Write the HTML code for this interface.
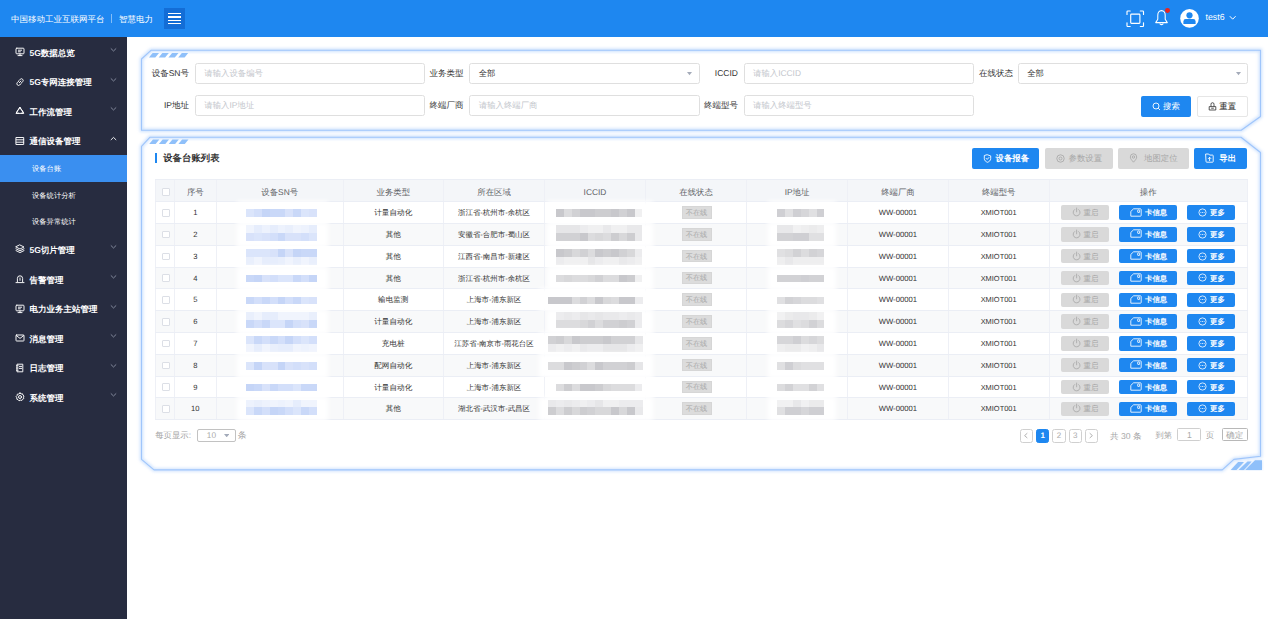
<!DOCTYPE html><html><head><meta charset="utf-8"><title>设备台账</title><style>
*{box-sizing:border-box;margin:0;padding:0}
html,body{width:1268px;height:619px;overflow:hidden;background:#fff}
body{font-family:"Liberation Sans",sans-serif;text-rendering:geometricPrecision;position:relative;color:#333;font-size:8.5px;line-height:1}
.abs{position:absolute}
.nw{white-space:nowrap}
#hdr{position:absolute;left:0;top:0;width:1268px;height:37px;background:#1e87f0}
#hdr .t{position:absolute;color:#fff;font-size:8.5px;line-height:10px;white-space:nowrap}
#side{position:absolute;left:0;top:37px;width:127px;height:582px;background:#272c40}
.mi{position:absolute;left:0;width:127px;height:29.6px}
.mi .tx{position:absolute;left:29.5px;top:9.8px;font-size:8.5px;line-height:10px;font-weight:bold;color:#fff;white-space:nowrap}
.mi svg.ic{position:absolute;left:15.3px;top:9.2px}
.mi svg.ch{position:absolute;left:110px;top:9.3px}
.si{position:absolute;left:0;width:127px;height:26.5px}
.si .tx{position:absolute;left:32px;top:8.6px;font-size:7.3px;line-height:9px;color:#fff;white-space:nowrap}
.lab{position:absolute;width:60px;text-align:right;font-size:8.5px;line-height:10px;color:#333;white-space:nowrap}
.inp{position:absolute;height:21px;width:230.3px;border:1px solid #dfdfdf;border-radius:2.5px;background:#fff}
.inp span{position:absolute;left:8.5px;top:5.4px;font-size:8.4px;line-height:9px;color:#c3c6cc;white-space:nowrap}
.inp span.v{color:#333;font-size:8.3px}
.inp svg{position:absolute;right:6.4px;top:8.4px}
.btn{position:absolute;border-radius:2px;white-space:nowrap;font-size:8.4px;line-height:10px}
.btn .bt{position:absolute;top:5.4px}
.b{background:#1e87f0;color:#fff}
.g{background:#d9d9d9;color:#a6a6a6}
.w{background:#fff;color:#333;border:1px solid #e6e6e6}
#tbl{position:absolute;left:155px;top:179px;width:1092.75px;height:242px}
.tr{position:absolute;left:0;width:1092.75px;border-bottom:1px solid #ebeef5}
.td{position:absolute;top:0;height:100%;border-right:1px solid #eef0f6;text-align:center;white-space:nowrap;overflow:visible}
.td.f{border-left:1px solid #eef0f6}
.th .td{font-size:8.4px;color:#606266}
.r .td{font-size:7.6px;color:#333}
.cx{position:absolute;left:0;right:0;text-align:center;white-space:nowrap}
.cb{position:absolute;left:6.1px;width:7.8px;height:7.8px;border:1px solid #dcdfe6;border-radius:1px;background:#fff}
.tag{position:absolute;left:35.5px;width:30px;height:12.6px;background:#dcdcdc;border:1px solid #d6d6d6;font-size:7.2px;line-height:10.6px;padding-top:0.8px;color:#a9a9a9;text-align:center}
.rb{position:absolute;height:14.4px;border-radius:2px;font-size:7.4px;line-height:9px;white-space:nowrap}
.rb .bt{position:absolute;top:2.9px}
.pg{position:absolute;top:429.2px;width:13.4px;height:13.4px;border:1px solid #d0d0d0;border-radius:2.5px;font-size:8px;line-height:11.2px;text-align:center;color:#aaa;background:#fff}
.pg.on{background:#1e87f0;border-color:#1e87f0;color:#fff}
.gt{position:absolute;font-size:8.6px;line-height:10px;color:#a5a5a5;white-space:nowrap}
</style></head><body>
<div id="hdr">
<div class="t" style="left:11px;top:13.6px;width:92px">中国移动工业互联网平台</div>
<div class="abs" style="left:111px;top:14px;width:1px;height:9px;background:rgba(255,255,255,.45)"></div>
<div class="t" style="left:119px;top:13.6px">智慧电力</div>
<div class="abs" style="left:164px;top:8px;width:21px;height:21px;background:#136dd6"><div class="abs" style="left:4px;top:5.2px;width:13px;height:1.3px;background:#fff"></div><div class="abs" style="left:4px;top:8.4px;width:13px;height:1.3px;background:#fff"></div><div class="abs" style="left:4px;top:11.6px;width:13px;height:1.3px;background:#fff"></div><div class="abs" style="left:4px;top:14.8px;width:13px;height:1.3px;background:#fff"></div></div>
<svg class="abs" style="left:1126px;top:9.5px" width="18.5" height="17.5" viewBox="0 0 18.5 17.5" fill="none" stroke="#fff" stroke-width="1.15" stroke-linecap="round" stroke-linejoin="round"><path d="M1 4.5V1.8Q1 1 1.8 1H4.2 M14.3 1H16.7Q17.5 1 17.5 1.8V4.5 M17.5 12.7V15.7Q17.5 16.5 16.7 16.5H14.3 M4.2 16.5H1.8Q1 16.5 1 15.7V12.7"/><rect x="4.7" y="4.1" width="9.2" height="9.2" rx="0.8"/></svg>
<svg class="abs" style="left:1154px;top:9px" width="16" height="17" viewBox="0 0 16 17" fill="none" stroke="#fff" stroke-width="1.05" stroke-linejoin="round" stroke-linecap="round"><path d="M7.5 1.6C4.9 1.6 3.8 3.8 3.8 6.2V10.2L1.7 13.6H13.3L11.2 10.2V6.2C11.2 3.8 10.1 1.6 7.5 1.6Z"/><path d="M6 14.9Q7.5 16.3 9 14.9"/></svg>
<div class="abs" style="left:1164.8px;top:8.2px;width:4.8px;height:4.8px;border-radius:50%;background:#e8251f"></div>
<svg class="abs" style="left:1180px;top:9px" width="19" height="19" viewBox="0 0 19 19"><circle cx="9.5" cy="9.4" r="9.3" fill="#fff"/><circle cx="9.5" cy="6.3" r="3.1" fill="#1e87f0"/><path d="M3.4 15V12.4Q3.4 10 5.8 10H13.2Q15.6 10 15.6 12.4V15Z" fill="#1e87f0"/></svg>
<div class="t" style="left:1205.5px;top:12.4px;font-size:8.8px">test6</div>
<svg class="abs" style="left:1229px;top:15px" width="8" height="6" viewBox="0 0 8 6" fill="none" stroke="#fff" stroke-width="1"><path d="M0.8 1.2L3.7 4.2L6.6 1.2"/></svg>
</div>
<div id="side">
<div class="mi" style="top:0.8px"><svg class="ic" width="10" height="10" viewBox="0 0 10 10" fill="none" stroke="#fff" stroke-width="0.95" stroke-linejoin="round" stroke-linecap="round"><rect x="1" y="1.2" width="8" height="5.6" rx="0.8"/><path d="M3 8.6H7M5 6.8V8.6M3.4 3.2H6.6M3.4 4.8H5.4"/></svg><div class="tx">5G数据总览</div><svg class="ch" width="7" height="6" viewBox="0 0 7 6" fill="none" stroke="#8d93a6" stroke-width="0.9"><path d="M0.8 1.4L3.5 4L6.2 1.4"/></svg></div>
<div class="mi" style="top:30.4px"><svg class="ic" width="10" height="10" viewBox="0 0 10 10" fill="none" stroke="#fff" stroke-width="0.95" stroke-linejoin="round" stroke-linecap="round"><path d="M4.3 5.7L5.9 4.1M3.6 4.3L2.3 5.6A1.7 1.7 0 0 0 4.7 8L6 6.7M6.4 5.9L7.7 4.6A1.7 1.7 0 0 0 5.3 2.2L4 3.5"/></svg><div class="tx">5G专网连接管理</div><svg class="ch" width="7" height="6" viewBox="0 0 7 6" fill="none" stroke="#8d93a6" stroke-width="0.9"><path d="M0.8 1.4L3.5 4L6.2 1.4"/></svg></div>
<div class="mi" style="top:60.0px"><svg class="ic" width="10" height="10" viewBox="0 0 10 10" fill="none" stroke="#fff" stroke-width="0.95" stroke-linejoin="round" stroke-linecap="round"><path d="M5 1.4L6.6 4M7.4 4.6L8.6 7.2H6.2M3.8 7.2H1.4L2.6 4.6M3.4 4L5 1.4"/><path d="M5 1.4L8.6 7.4H1.4Z"/></svg><div class="tx">工作流管理</div><svg class="ch" width="7" height="6" viewBox="0 0 7 6" fill="none" stroke="#8d93a6" stroke-width="0.9"><path d="M0.8 1.4L3.5 4L6.2 1.4"/></svg></div>
<div class="mi" style="top:89.6px"><svg class="ic" width="10" height="10" viewBox="0 0 10 10" fill="none" stroke="#fff" stroke-width="0.95" stroke-linejoin="round" stroke-linecap="round"><path d="M1.3 1.5H8.7V8.5H1.3ZM1.3 3.8H8.7M1.3 6.2H8.7"/></svg><div class="tx">通信设备管理</div><svg class="ch" width="7" height="6" viewBox="0 0 7 6" fill="none" stroke="#fff" stroke-width="0.9"><path d="M0.8 4L3.5 1.4L6.2 4"/></svg></div>
<div class="si" style="top:118.0px;background:#3a8ff0"><div class="tx">设备台账</div></div>
<div class="si" style="top:144.6px"><div class="tx" style="top:9.2px">设备统计分析</div></div>
<div class="si" style="top:171.2px"><div class="tx">设备异常统计</div></div>
<div class="mi" style="top:198.2px"><svg class="ic" width="10" height="10" viewBox="0 0 10 10" fill="none" stroke="#fff" stroke-width="0.95" stroke-linejoin="round" stroke-linecap="round"><path d="M5 1L9 3L5 5L1 3ZM1 4.8L5 6.8L9 4.8M1 6.6L5 8.6L9 6.6"/></svg><div class="tx">5G切片管理</div><svg class="ch" width="7" height="6" viewBox="0 0 7 6" fill="none" stroke="#8d93a6" stroke-width="0.9"><path d="M0.8 1.4L3.5 4L6.2 1.4"/></svg></div>
<div class="mi" style="top:227.8px"><svg class="ic" width="10" height="10" viewBox="0 0 10 10" fill="none" stroke="#fff" stroke-width="0.95" stroke-linejoin="round" stroke-linecap="round"><path d="M2.4 7.6V4.4A2.6 2.6 0 0 1 7.6 4.4V7.6M1 8.6H9M5 4V6.4"/></svg><div class="tx">告警管理</div><svg class="ch" width="7" height="6" viewBox="0 0 7 6" fill="none" stroke="#8d93a6" stroke-width="0.9"><path d="M0.8 1.4L3.5 4L6.2 1.4"/></svg></div>
<div class="mi" style="top:257.4px"><svg class="ic" width="10" height="10" viewBox="0 0 10 10" fill="none" stroke="#fff" stroke-width="0.95" stroke-linejoin="round" stroke-linecap="round"><rect x="1" y="1.2" width="8" height="5.6" rx="0.8"/><path d="M3 8.6H7M5 6.8V8.6M3.4 3.2H6.6M3.4 4.8H5.4"/></svg><div class="tx">电力业务主站管理</div><svg class="ch" width="7" height="6" viewBox="0 0 7 6" fill="none" stroke="#8d93a6" stroke-width="0.9"><path d="M0.8 1.4L3.5 4L6.2 1.4"/></svg></div>
<div class="mi" style="top:287.0px"><svg class="ic" width="10" height="10" viewBox="0 0 10 10" fill="none" stroke="#fff" stroke-width="0.95" stroke-linejoin="round" stroke-linecap="round"><rect x="1" y="2" width="8" height="6" rx="0.6"/><path d="M1.4 2.6L5 5.4L8.6 2.6"/></svg><div class="tx">消息管理</div><svg class="ch" width="7" height="6" viewBox="0 0 7 6" fill="none" stroke="#8d93a6" stroke-width="0.9"><path d="M0.8 1.4L3.5 4L6.2 1.4"/></svg></div>
<div class="mi" style="top:316.6px"><svg class="ic" width="10" height="10" viewBox="0 0 10 10" fill="none" stroke="#fff" stroke-width="0.95" stroke-linejoin="round" stroke-linecap="round"><path d="M2.4 1.2H7.8V8.8H2.4ZM1.4 2.8H3.2M1.4 5H3.2M1.4 7.2H3.2M4.4 3.4H6.6M4.4 5.4H6.6"/></svg><div class="tx">日志管理</div><svg class="ch" width="7" height="6" viewBox="0 0 7 6" fill="none" stroke="#8d93a6" stroke-width="0.9"><path d="M0.8 1.4L3.5 4L6.2 1.4"/></svg></div>
<div class="mi" style="top:346.2px"><svg class="ic" width="10" height="10" viewBox="0 0 10 10" fill="none" stroke="#fff" stroke-width="0.95" stroke-linejoin="round" stroke-linecap="round"><circle cx="5" cy="5" r="1.5"/><path d="M5 1.1L6.1 1.9L7.5 1.8L7.9 3.1L9 4L8.5 5.2L8.8 6.6L7.5 7.2L6.8 8.5L5.4 8.2L4 8.8L3.1 7.7L1.8 7.2L1.9 5.8L1.1 4.6L2.1 3.6L2.3 2.2L3.7 2L5 1.1Z"/></svg><div class="tx">系统管理</div><svg class="ch" width="7" height="6" viewBox="0 0 7 6" fill="none" stroke="#8d93a6" stroke-width="0.9"><path d="M0.8 1.4L3.5 4L6.2 1.4"/></svg></div>
</div>
<svg class="abs" style="left:0;top:0" width="1268" height="619" viewBox="0 0 1268 619">
<defs><filter id="gl" x="-5%" y="-5%" width="110%" height="110%"><feGaussianBlur stdDeviation="1.6"/></filter></defs>
<g fill="#fff" stroke="none"><path d="M141.5 59L151 50.3H1260.5V116.5L1241.2 130.2H141.5Z"/><path d="M141.5 146.3L149.8 137.3H1241L1260.5 152.5V456.2L1233.9 459.4L1222.3 469.9H154L141.5 459.4Z"/></g>
<g fill="none" stroke="#a6cafc" stroke-width="3.4" filter="url(#gl)" opacity="0.55"><path d="M141.5 59L151 50.3H1260.5V116.5L1241.2 130.2H141.5Z"/><path d="M141.5 146.3L149.8 137.3H1241L1260.5 152.5V456.2L1233.9 459.4L1222.3 469.9H154L141.5 459.4Z"/></g>
<g fill="none" stroke="#9fc5fb" stroke-width="1.1" stroke-linejoin="round"><path d="M141.5 59L151 50.3H1260.5V116.5L1241.2 130.2H141.5Z"/><path d="M141.5 146.3L149.8 137.3H1241L1260.5 152.5V456.2L1233.9 459.4L1222.3 469.9H154L141.5 459.4Z"/></g>
<g fill="#8fc0fa"><path d="M148.9 57.6L152.6 53.0H159.0L155.3 57.6Z"/><path d="M158.7 57.6L162.3 53.0H168.8L165.1 57.6Z"/><path d="M168.4 57.6L172.1 53.0H178.5L174.8 57.6Z"/><path d="M178.2 57.6L181.8 53.0H188.2L184.6 57.6Z"/><path d="M149.2 143.9L152.9 139.6H159.3L155.6 143.9Z"/><path d="M158.9 143.9L162.6 139.6H169.0L165.3 143.9Z"/><path d="M168.7 143.9L172.4 139.6H178.8L175.1 143.9Z"/><path d="M178.4 143.9L182.1 139.6H188.5L184.8 143.9Z"/></g>
<g fill="#a6cafc" filter="url(#gl)" opacity="0.5"><path d="M1230.7 470L1238.1 462H1244L1236.5 470Z"/><path d="M1238.5 470L1247.5 461.4H1251.7L1244 470Z"/><path d="M1245.2 470L1255 460.3H1262V470Z"/></g>
<g fill="#8fc0fa"><path d="M1230.7 470L1238.1 462H1244L1236.5 470Z"/><path d="M1238.5 470L1247.5 461.4H1251.7L1244 470Z"/><path d="M1245.2 470L1255 460.3H1262V470Z"/></g>
</svg>
<div class="lab" style="left:129.00px;top:68.30px">设备SN号</div>
<div class="inp" style="left:194.75px;top:63.00px"><span>请输入设备编号</span></div>
<div class="lab" style="left:403.60px;top:68.30px">业务类型</div>
<div class="inp" style="left:469.25px;top:63.00px"><span class="v">全部</span><svg width="5" height="3.2" viewBox="0 0 5 3.2"><path d="M0 0H5L2.5 3.2Z" fill="#a4abb9"/></svg></div>
<div class="lab" style="left:678.00px;top:68.30px">ICCID</div>
<div class="inp" style="left:743.50px;top:63.00px"><span>请输入ICCID</span></div>
<div class="lab" style="left:953.00px;top:68.30px">在线状态</div>
<div class="inp" style="left:1017.75px;top:63.00px"><span class="v">全部</span><svg width="5" height="3.2" viewBox="0 0 5 3.2"><path d="M0 0H5L2.5 3.2Z" fill="#a4abb9"/></svg></div>
<div class="lab" style="left:129.00px;top:100.30px">IP地址</div>
<div class="inp" style="left:194.75px;top:95.00px"><span>请输入IP地址</span></div>
<div class="lab" style="left:403.60px;top:100.30px">终端厂商</div>
<div class="inp" style="left:469.25px;top:95.00px"><span>请输入终端厂商</span></div>
<div class="lab" style="left:678.00px;top:100.30px">终端型号</div>
<div class="inp" style="left:743.50px;top:95.00px"><span>请输入终端型号</span></div>
<div class="btn b" style="left:1141px;top:96.3px;width:50.2px;height:20.4px"><svg class="abs" style="left:10.6px;top:5.5px" width="9" height="9" viewBox="0 0 9 9" fill="none" stroke="#fff" stroke-width="0.9"><circle cx="4" cy="4" r="3"/><path d="M6.2 6.2L8 8"/></svg><span class="bt" style="left:22px;top:4.3px">搜索</span></div>
<div class="btn w" style="left:1196.8px;top:96.3px;width:50.75px;height:20.4px"><svg class="abs" style="left:10px;top:4.4px" width="9" height="9" viewBox="0 0 9 9" fill="none" stroke="#444" stroke-width="0.9" stroke-linejoin="round"><path d="M1.2 8V4.6H7.8V8ZM3 4.6V2.2A1.5 1.5 0 0 1 6 2.2V4.6M3.2 6.2H5.8"/></svg><span class="bt" style="left:21.5px;top:3.4px;color:#222">重置</span></div>
<div class="abs" style="left:155px;top:153.3px;width:2px;height:9.3px;background:#1e87f0"></div>
<div class="abs nw" style="left:163.2px;top:153px;font-size:9.3px;line-height:11px;font-weight:bold;color:#333;letter-spacing:0.1px">设备台账列表</div>
<div class="btn b" style="left:972.00px;top:148px;width:67.25px;height:20.8px"><svg class="abs" style="left:10.75px;top:5.7px" width="9" height="9" viewBox="0 0 9 9" fill="none" stroke="#fff" stroke-width="0.9" stroke-linejoin="round" stroke-linecap="round"><path d="M4.5 0.8L7.7 1.9V4.6C7.7 6.4 6.3 7.6 4.5 8.3C2.7 7.6 1.3 6.4 1.3 4.6V1.9Z"/><path d="M3.2 4.4L4.2 5.4L5.9 3.5"/></svg><span class="bt" style="left:23.50px"><b>设备报备</b></span></div>
<div class="btn g" style="left:1044.75px;top:148px;width:67.75px;height:20.8px"><svg class="abs" style="left:11.00px;top:5.7px" width="9" height="9" viewBox="0 0 9 9" fill="none" stroke="#a6a6a6" stroke-width="0.8"><circle cx="4.5" cy="4.5" r="3.7"/><circle cx="4.5" cy="4.5" r="1.5"/></svg><span class="bt" style="left:23.75px">参数设置</span></div>
<div class="btn g" style="left:1117.75px;top:148px;width:70.75px;height:20.8px"><svg class="abs" style="left:11.50px;top:5.2px" width="9" height="10" viewBox="0 0 9 10" fill="none" stroke="#a6a6a6" stroke-width="0.8"><path d="M4.5 9.2C2.6 7 1.3 5.6 1.3 4A3.2 3.2 0 0 1 7.7 4C7.7 5.6 6.4 7 4.5 9.2Z"/><circle cx="4.5" cy="4" r="1.2"/></svg><span class="bt" style="left:26.25px">地图定位</span></div>
<div class="btn b" style="left:1193.50px;top:148px;width:53.75px;height:20.8px"><svg class="abs" style="left:11.60px;top:5.4px" width="9" height="10" viewBox="0 0 9 10" fill="none" stroke="#fff" stroke-width="0.9" stroke-linejoin="round" stroke-linecap="round"><path d="M1 1H3.7L4.6 2.1H7.6Q8.2 2.1 8.2 2.7V8.6Q8.2 9.2 7.6 9.2H1.6Q1 9.2 1 8.6Z"/><path d="M4.6 7.6V4.4M3.3 5.6L4.6 4.3L5.9 5.6"/></svg><span class="bt" style="left:25.80px"><b>导出</b></span></div>
<div id="tbl">
<div class="tr th" style="top:0;height:23px;background:#f4f6f9;border-top:1px solid #ebeef5">
<div class="td f" style="left:0.00px;width:19.50px"><div class="cb" style="top:8.3px"></div></div>
<div class="td" style="left:19.50px;width:42.50px"><span class="cx" style="top:6.90px;line-height:10.0px">序号</span></div>
<div class="td" style="left:62.00px;width:126.50px"><span class="cx" style="top:6.90px;line-height:10.0px">设备SN号</span></div>
<div class="td" style="left:188.50px;width:100.50px"><span class="cx" style="top:6.90px;line-height:10.0px">业务类型</span></div>
<div class="td" style="left:289.00px;width:101.00px"><span class="cx" style="top:6.90px;line-height:10.0px">所在区域</span></div>
<div class="td" style="left:390.00px;width:101.00px"><span class="cx" style="top:6.90px;line-height:10.0px">ICCID</span></div>
<div class="td" style="left:491.00px;width:101.00px"><span class="cx" style="top:6.90px;line-height:10.0px">在线状态</span></div>
<div class="td" style="left:592.00px;width:101.00px"><span class="cx" style="top:6.90px;line-height:10.0px">IP地址</span></div>
<div class="td" style="left:693.00px;width:100.75px"><span class="cx" style="top:6.90px;line-height:10.0px">终端厂商</span></div>
<div class="td" style="left:793.75px;width:100.75px"><span class="cx" style="top:6.90px;line-height:10.0px">终端型号</span></div>
<div class="td" style="left:894.50px;width:198.25px"><span class="cx" style="top:6.90px;line-height:10.0px">操作</span></div>
</div>
<div class="tr r" style="top:23px;height:22px;background:#fff">
<div class="td f" style="left:0.00px;width:19.50px"><div class="cb" style="top:6.9px"></div></div>
<div class="td" style="left:19.50px;width:42.50px"><span class="cx" style="top:6.10px;line-height:9.0px">1</span></div>
<div class="td" style="left:62.00px;width:126.50px"><div class="abs" style="left:20.4px;top:-1.5px;width:91.0px;height:24.0px;background:#fff;filter:blur(2.5px)"></div><div class="abs" style="left:29.4px;top:7.4px;width:71.1px;height:7.6px;background:linear-gradient(90deg,#dbe5fb 0.0px,#dbe5fb 7.9px,#d3dffa 7.9px,#d3dffa 15.8px,#c5d5f7 15.8px,#c5d5f7 23.7px,#c9d8f8 23.7px,#c9d8f8 31.6px,#c9d8f8 31.6px,#c9d8f8 39.5px,#d8e2fa 39.5px,#d8e2fa 47.4px,#c9d8f8 47.4px,#c9d8f8 55.3px,#dbe5fb 55.3px,#dbe5fb 63.2px,#d8e2fa 63.2px,#d8e2fa 71.1px)"></div></div>
<div class="td" style="left:188.50px;width:100.50px"><span class="cx" style="top:6.10px;line-height:9.0px">计量自动化</span></div>
<div class="td" style="left:289.00px;width:101.00px"><span class="cx" style="top:6.10px;line-height:9.0px;font-size:7.45px">浙江省-杭州市-余杭区</span></div>
<div class="td" style="left:390.00px;width:101.00px"><div class="abs" style="left:1.5px;top:-1.5px;width:106.0px;height:24.0px;background:#fff;filter:blur(2.5px)"></div><div class="abs" style="left:10.5px;top:7.4px;width:86.9px;height:7.6px;background:linear-gradient(90deg,#c8c8cc 0.0px,#c8c8cc 7.9px,#dcdcde 7.9px,#dcdcde 15.8px,#d1d1d4 15.8px,#d1d1d4 23.7px,#c8c8cc 23.7px,#c8c8cc 31.6px,#c8c8cc 31.6px,#c8c8cc 39.5px,#cdcdd0 39.5px,#cdcdd0 47.4px,#cdcdd0 47.4px,#cdcdd0 55.3px,#c8c8cc 55.3px,#c8c8cc 63.2px,#d1d1d4 63.2px,#d1d1d4 71.1px,#c8c8cc 71.1px,#c8c8cc 79.0px,#f0f0f1 79.0px,#f0f0f1 86.9px)"></div></div>
<div class="td" style="left:491.00px;width:101.00px"><div class="tag" style="top:4.20px">不在线</div></div>
<div class="td" style="left:592.00px;width:101.00px"><div class="abs" style="left:21.0px;top:-1.5px;width:67.5px;height:24.0px;background:#fff;filter:blur(2.5px)"></div><div class="abs" style="left:30.0px;top:7.4px;width:47.4px;height:7.6px;background:linear-gradient(90deg,#cfcfd3 0.0px,#cfcfd3 7.9px,#e0e0e2 7.9px,#e0e0e2 15.8px,#cfcfd3 15.8px,#cfcfd3 23.7px,#d6d6d9 23.7px,#d6d6d9 31.6px,#e0e0e2 31.6px,#e0e0e2 39.5px,#cfcfd3 39.5px,#cfcfd3 47.4px)"></div></div>
<div class="td" style="left:693.00px;width:100.75px"><span class="cx" style="top:6.10px;line-height:9.0px;font-size:7.7px">WW-00001</span></div>
<div class="td" style="left:793.75px;width:100.75px"><span class="cx" style="top:6.10px;line-height:9.0px;font-size:7.45px">XMIOT001</span></div>
<div class="td" style="left:894.50px;width:198.25px"><div class="rb g" style="top:3.40px;left:11.5px;width:48.2px"><svg class="abs" style="left:10.7px;top:1.9px" width="9.2" height="10.35" viewBox="0 0 8 9" fill="none" stroke="#a6a6a6" stroke-width="0.7" stroke-linecap="round"><path d="M4 0.9V4.2M2.3 2.2A3 3 0 1 0 5.7 2.2"/></svg><span class="bt" style="left:22.6px">重启</span></div><div class="rb b" style="top:3.40px;left:69.6px;width:58.3px"><svg class="abs" style="left:11.1px;top:2.2px" width="12" height="9" viewBox="0 0 12 9" fill="none" stroke="#fff" stroke-width="0.85" stroke-linejoin="round"><path d="M0.8 8.2V3.4L3.6 0.8H10.4Q11.2 0.8 11.2 1.6V7.4Q11.2 8.2 10.4 8.2Z"/><rect x="7.7" y="1.9" width="1.9" height="2.6" rx="0.5"/></svg><span class="bt" style="left:25.9px"><b>卡信息</b></span></div><div class="rb b" style="top:3.40px;left:137.7px;width:48.1px"><svg class="abs" style="left:11.1px;top:2.5px" width="9" height="9" viewBox="0 0 9 9" fill="none" stroke="#fff" stroke-width="0.8"><circle cx="4.5" cy="4.5" r="3.6"/><g fill="#fff" stroke="none"><circle cx="2.9" cy="4.5" r="0.5"/><circle cx="4.5" cy="4.5" r="0.5"/><circle cx="6.1" cy="4.5" r="0.5"/></g></svg><span class="bt" style="left:22.8px"><b>更多</b></span></div></div>
</div>
<div class="tr r" style="top:45px;height:22px;background:#f8f9fa">
<div class="td f" style="left:0.00px;width:19.50px"><div class="cb" style="top:6.7px"></div></div>
<div class="td" style="left:19.50px;width:42.50px"><span class="cx" style="top:5.90px;line-height:9.0px">2</span></div>
<div class="td" style="left:62.00px;width:126.50px"><div class="abs" style="left:20.4px;top:-1.5px;width:91.0px;height:24.0px;background:#fff;filter:blur(2.5px)"></div><div class="abs" style="left:29.4px;top:1.2px;width:71.1px;height:7.7px;background:linear-gradient(90deg,#f0f4fd 0.0px,#f0f4fd 7.9px,#e6edfc 7.9px,#e6edfc 15.8px,#edf2fd 15.8px,#edf2fd 23.7px,#e6edfc 23.7px,#e6edfc 31.6px,#edf2fd 31.6px,#edf2fd 39.5px,#e9effc 39.5px,#e9effc 47.4px,#f0f4fd 47.4px,#f0f4fd 55.3px,#edf2fd 55.3px,#edf2fd 63.2px,#e6edfc 63.2px,#e6edfc 71.1px)"></div><div class="abs" style="left:29.4px;top:8.9px;width:71.1px;height:7.9px;background:linear-gradient(90deg,#d8e2fa 0.0px,#d8e2fa 7.9px,#dbe5fb 7.9px,#dbe5fb 15.8px,#d8e2fa 15.8px,#d8e2fa 23.7px,#d3dffa 23.7px,#d3dffa 31.6px,#c9d8f8 31.6px,#c9d8f8 39.5px,#d8e2fa 39.5px,#d8e2fa 47.4px,#d8e2fa 47.4px,#d8e2fa 55.3px,#d3dffa 55.3px,#d3dffa 63.2px,#dbe5fb 63.2px,#dbe5fb 71.1px)"></div></div>
<div class="td" style="left:188.50px;width:100.50px"><span class="cx" style="top:5.90px;line-height:9.0px">其他</span></div>
<div class="td" style="left:289.00px;width:101.00px"><span class="cx" style="top:5.90px;line-height:9.0px;font-size:7.45px">安徽省-合肥市-蜀山区</span></div>
<div class="td" style="left:390.00px;width:101.00px"><div class="abs" style="left:1.5px;top:-1.5px;width:106.0px;height:24.0px;background:#fff;filter:blur(2.5px)"></div><div class="abs" style="left:10.5px;top:1.2px;width:86.9px;height:7.7px;background:linear-gradient(90deg,#e6e6e8 0.0px,#e6e6e8 7.9px,#e6e6e8 7.9px,#e6e6e8 15.8px,#e6e6e8 15.8px,#e6e6e8 23.7px,#ececee 23.7px,#ececee 31.6px,#f0f0f1 31.6px,#f0f0f1 39.5px,#f0f0f1 39.5px,#f0f0f1 47.4px,#e9e9eb 47.4px,#e9e9eb 55.3px,#f0f0f1 55.3px,#f0f0f1 63.2px,#f0f0f1 63.2px,#f0f0f1 71.1px,#e9e9eb 71.1px,#e9e9eb 79.0px,#e9e9eb 79.0px,#e9e9eb 86.9px)"></div><div class="abs" style="left:10.5px;top:8.9px;width:86.9px;height:7.9px;background:linear-gradient(90deg,#d1d1d4 0.0px,#d1d1d4 7.9px,#d1d1d4 7.9px,#d1d1d4 15.8px,#d1d1d4 15.8px,#d1d1d4 23.7px,#c8c8cc 23.7px,#c8c8cc 31.6px,#dcdcde 31.6px,#dcdcde 39.5px,#d8d8da 39.5px,#d8d8da 47.4px,#dcdcde 47.4px,#dcdcde 55.3px,#cdcdd0 55.3px,#cdcdd0 63.2px,#d8d8da 63.2px,#d8d8da 71.1px,#cdcdd0 71.1px,#cdcdd0 79.0px,#e9e9eb 79.0px,#e9e9eb 86.9px)"></div></div>
<div class="td" style="left:491.00px;width:101.00px"><div class="tag" style="top:4.00px">不在线</div></div>
<div class="td" style="left:592.00px;width:101.00px"><div class="abs" style="left:21.0px;top:-1.5px;width:67.5px;height:24.0px;background:#fff;filter:blur(2.5px)"></div><div class="abs" style="left:30.0px;top:1.2px;width:47.4px;height:7.7px;background:linear-gradient(90deg,#e8e8ea 0.0px,#e8e8ea 7.9px,#e8e8ea 7.9px,#e8e8ea 15.8px,#f1f1f2 15.8px,#f1f1f2 23.7px,#eeeeef 23.7px,#eeeeef 31.6px,#ebebec 31.6px,#ebebec 39.5px,#eeeeef 39.5px,#eeeeef 47.4px)"></div><div class="abs" style="left:30.0px;top:8.9px;width:47.4px;height:7.9px;background:linear-gradient(90deg,#d2d2d5 0.0px,#d2d2d5 7.9px,#d2d2d5 7.9px,#d2d2d5 15.8px,#cfcfd3 15.8px,#cfcfd3 23.7px,#cfcfd3 23.7px,#cfcfd3 31.6px,#e0e0e2 31.6px,#e0e0e2 39.5px,#e0e0e2 39.5px,#e0e0e2 47.4px)"></div></div>
<div class="td" style="left:693.00px;width:100.75px"><span class="cx" style="top:5.90px;line-height:9.0px;font-size:7.7px">WW-00001</span></div>
<div class="td" style="left:793.75px;width:100.75px"><span class="cx" style="top:5.90px;line-height:9.0px;font-size:7.45px">XMIOT001</span></div>
<div class="td" style="left:894.50px;width:198.25px"><div class="rb g" style="top:3.20px;left:11.5px;width:48.2px"><svg class="abs" style="left:10.7px;top:1.9px" width="9.2" height="10.35" viewBox="0 0 8 9" fill="none" stroke="#a6a6a6" stroke-width="0.7" stroke-linecap="round"><path d="M4 0.9V4.2M2.3 2.2A3 3 0 1 0 5.7 2.2"/></svg><span class="bt" style="left:22.6px">重启</span></div><div class="rb b" style="top:3.20px;left:69.6px;width:58.3px"><svg class="abs" style="left:11.1px;top:2.2px" width="12" height="9" viewBox="0 0 12 9" fill="none" stroke="#fff" stroke-width="0.85" stroke-linejoin="round"><path d="M0.8 8.2V3.4L3.6 0.8H10.4Q11.2 0.8 11.2 1.6V7.4Q11.2 8.2 10.4 8.2Z"/><rect x="7.7" y="1.9" width="1.9" height="2.6" rx="0.5"/></svg><span class="bt" style="left:25.9px"><b>卡信息</b></span></div><div class="rb b" style="top:3.20px;left:137.7px;width:48.1px"><svg class="abs" style="left:11.1px;top:2.5px" width="9" height="9" viewBox="0 0 9 9" fill="none" stroke="#fff" stroke-width="0.8"><circle cx="4.5" cy="4.5" r="3.6"/><g fill="#fff" stroke="none"><circle cx="2.9" cy="4.5" r="0.5"/><circle cx="4.5" cy="4.5" r="0.5"/><circle cx="6.1" cy="4.5" r="0.5"/></g></svg><span class="bt" style="left:22.8px"><b>更多</b></span></div></div>
</div>
<div class="tr r" style="top:67px;height:22px;background:#fff">
<div class="td f" style="left:0.00px;width:19.50px"><div class="cb" style="top:6.5px"></div></div>
<div class="td" style="left:19.50px;width:42.50px"><span class="cx" style="top:5.70px;line-height:9.0px">3</span></div>
<div class="td" style="left:62.00px;width:126.50px"><div class="abs" style="left:20.4px;top:-1.5px;width:91.0px;height:24.0px;background:#fff;filter:blur(2.5px)"></div><div class="abs" style="left:29.4px;top:2.7px;width:71.1px;height:8.0px;background:linear-gradient(90deg,#dbe5fb 0.0px,#dbe5fb 7.9px,#dbe5fb 7.9px,#dbe5fb 15.8px,#dbe5fb 15.8px,#dbe5fb 23.7px,#d8e2fa 23.7px,#d8e2fa 31.6px,#c5d5f7 31.6px,#c5d5f7 39.5px,#d8e2fa 39.5px,#d8e2fa 47.4px,#c5d5f7 47.4px,#c5d5f7 55.3px,#c9d8f8 55.3px,#c9d8f8 63.2px,#c9d8f8 63.2px,#c9d8f8 71.1px)"></div><div class="abs" style="left:29.4px;top:10.7px;width:71.1px;height:8.0px;background:linear-gradient(90deg,#e9effc 0.0px,#e9effc 7.9px,#f0f4fd 7.9px,#f0f4fd 15.8px,#e6edfc 15.8px,#e6edfc 23.7px,#e6edfc 23.7px,#e6edfc 31.6px,#e9effc 31.6px,#e9effc 39.5px,#f0f4fd 39.5px,#f0f4fd 47.4px,#e9effc 47.4px,#e9effc 55.3px,#f0f4fd 55.3px,#f0f4fd 63.2px,#e9effc 63.2px,#e9effc 71.1px)"></div></div>
<div class="td" style="left:188.50px;width:100.50px"><span class="cx" style="top:5.70px;line-height:9.0px">其他</span></div>
<div class="td" style="left:289.00px;width:101.00px"><span class="cx" style="top:5.70px;line-height:9.0px;font-size:7.45px">江西省-南昌市-新建区</span></div>
<div class="td" style="left:390.00px;width:101.00px"><div class="abs" style="left:1.5px;top:-1.5px;width:106.0px;height:24.0px;background:#fff;filter:blur(2.5px)"></div><div class="abs" style="left:10.5px;top:2.7px;width:86.9px;height:8.0px;background:linear-gradient(90deg,#c8c8cc 0.0px,#c8c8cc 7.9px,#cdcdd0 7.9px,#cdcdd0 15.8px,#d8d8da 15.8px,#d8d8da 23.7px,#d1d1d4 23.7px,#d1d1d4 31.6px,#dcdcde 31.6px,#dcdcde 39.5px,#c8c8cc 39.5px,#c8c8cc 47.4px,#cdcdd0 47.4px,#cdcdd0 55.3px,#c8c8cc 55.3px,#c8c8cc 63.2px,#d1d1d4 63.2px,#d1d1d4 71.1px,#d8d8da 71.1px,#d8d8da 79.0px,#ececee 79.0px,#ececee 86.9px)"></div><div class="abs" style="left:10.5px;top:10.7px;width:86.9px;height:8.0px;background:linear-gradient(90deg,#ececee 0.0px,#ececee 7.9px,#f0f0f1 7.9px,#f0f0f1 15.8px,#f0f0f1 15.8px,#f0f0f1 23.7px,#f0f0f1 23.7px,#f0f0f1 31.6px,#e6e6e8 31.6px,#e6e6e8 39.5px,#ececee 39.5px,#ececee 47.4px,#f0f0f1 47.4px,#f0f0f1 55.3px,#f0f0f1 55.3px,#f0f0f1 63.2px,#e9e9eb 63.2px,#e9e9eb 71.1px,#ececee 71.1px,#ececee 79.0px,#f0f0f1 79.0px,#f0f0f1 86.9px)"></div></div>
<div class="td" style="left:491.00px;width:101.00px"><div class="tag" style="top:3.80px">不在线</div></div>
<div class="td" style="left:592.00px;width:101.00px"><div class="abs" style="left:21.0px;top:-1.5px;width:67.5px;height:24.0px;background:#fff;filter:blur(2.5px)"></div><div class="abs" style="left:30.0px;top:2.7px;width:47.4px;height:8.0px;background:linear-gradient(90deg,#e0e0e2 0.0px,#e0e0e2 7.9px,#dcdcde 7.9px,#dcdcde 15.8px,#d2d2d5 15.8px,#d2d2d5 23.7px,#dcdcde 23.7px,#dcdcde 31.6px,#d2d2d5 31.6px,#d2d2d5 39.5px,#d6d6d9 39.5px,#d6d6d9 47.4px)"></div><div class="abs" style="left:30.0px;top:10.7px;width:47.4px;height:8.0px;background:linear-gradient(90deg,#eeeeef 0.0px,#eeeeef 7.9px,#e8e8ea 7.9px,#e8e8ea 15.8px,#eeeeef 15.8px,#eeeeef 23.7px,#eeeeef 23.7px,#eeeeef 31.6px,#eeeeef 31.6px,#eeeeef 39.5px,#eeeeef 39.5px,#eeeeef 47.4px)"></div></div>
<div class="td" style="left:693.00px;width:100.75px"><span class="cx" style="top:5.70px;line-height:9.0px;font-size:7.7px">WW-00001</span></div>
<div class="td" style="left:793.75px;width:100.75px"><span class="cx" style="top:5.70px;line-height:9.0px;font-size:7.45px">XMIOT001</span></div>
<div class="td" style="left:894.50px;width:198.25px"><div class="rb g" style="top:3.00px;left:11.5px;width:48.2px"><svg class="abs" style="left:10.7px;top:1.9px" width="9.2" height="10.35" viewBox="0 0 8 9" fill="none" stroke="#a6a6a6" stroke-width="0.7" stroke-linecap="round"><path d="M4 0.9V4.2M2.3 2.2A3 3 0 1 0 5.7 2.2"/></svg><span class="bt" style="left:22.6px">重启</span></div><div class="rb b" style="top:3.00px;left:69.6px;width:58.3px"><svg class="abs" style="left:11.1px;top:2.2px" width="12" height="9" viewBox="0 0 12 9" fill="none" stroke="#fff" stroke-width="0.85" stroke-linejoin="round"><path d="M0.8 8.2V3.4L3.6 0.8H10.4Q11.2 0.8 11.2 1.6V7.4Q11.2 8.2 10.4 8.2Z"/><rect x="7.7" y="1.9" width="1.9" height="2.6" rx="0.5"/></svg><span class="bt" style="left:25.9px"><b>卡信息</b></span></div><div class="rb b" style="top:3.00px;left:137.7px;width:48.1px"><svg class="abs" style="left:11.1px;top:2.5px" width="9" height="9" viewBox="0 0 9 9" fill="none" stroke="#fff" stroke-width="0.8"><circle cx="4.5" cy="4.5" r="3.6"/><g fill="#fff" stroke="none"><circle cx="2.9" cy="4.5" r="0.5"/><circle cx="4.5" cy="4.5" r="0.5"/><circle cx="6.1" cy="4.5" r="0.5"/></g></svg><span class="bt" style="left:22.8px"><b>更多</b></span></div></div>
</div>
<div class="tr r" style="top:89px;height:21px;background:#f8f9fa">
<div class="td f" style="left:0.00px;width:19.50px"><div class="cb" style="top:6.3px"></div></div>
<div class="td" style="left:19.50px;width:42.50px"><span class="cx" style="top:5.50px;line-height:9.0px">4</span></div>
<div class="td" style="left:62.00px;width:126.50px"><div class="abs" style="left:20.4px;top:-1.5px;width:91.0px;height:23.0px;background:#fff;filter:blur(2.5px)"></div><div class="abs" style="left:29.4px;top:6.8px;width:71.1px;height:7.6px;background:linear-gradient(90deg,#c9d8f8 0.0px,#c9d8f8 7.9px,#c5d5f7 7.9px,#c5d5f7 15.8px,#d8e2fa 15.8px,#d8e2fa 23.7px,#d3dffa 23.7px,#d3dffa 31.6px,#dbe5fb 31.6px,#dbe5fb 39.5px,#dbe5fb 39.5px,#dbe5fb 47.4px,#c9d8f8 47.4px,#c9d8f8 55.3px,#d3dffa 55.3px,#d3dffa 63.2px,#c5d5f7 63.2px,#c5d5f7 71.1px)"></div></div>
<div class="td" style="left:188.50px;width:100.50px"><span class="cx" style="top:5.50px;line-height:9.0px">其他</span></div>
<div class="td" style="left:289.00px;width:101.00px"><span class="cx" style="top:5.50px;line-height:9.0px;font-size:7.45px">浙江省-杭州市-余杭区</span></div>
<div class="td" style="left:390.00px;width:101.00px"><div class="abs" style="left:1.5px;top:-1.5px;width:106.0px;height:23.0px;background:#fff;filter:blur(2.5px)"></div><div class="abs" style="left:10.5px;top:6.8px;width:86.9px;height:7.6px;background:linear-gradient(90deg,#dcdcde 0.0px,#dcdcde 7.9px,#d8d8da 7.9px,#d8d8da 15.8px,#dcdcde 15.8px,#dcdcde 23.7px,#dcdcde 23.7px,#dcdcde 31.6px,#d8d8da 31.6px,#d8d8da 39.5px,#d1d1d4 39.5px,#d1d1d4 47.4px,#dcdcde 47.4px,#dcdcde 55.3px,#dcdcde 55.3px,#dcdcde 63.2px,#c8c8cc 63.2px,#c8c8cc 71.1px,#cdcdd0 71.1px,#cdcdd0 79.0px,#f0f0f1 79.0px,#f0f0f1 86.9px)"></div></div>
<div class="td" style="left:491.00px;width:101.00px"><div class="tag" style="top:3.60px">不在线</div></div>
<div class="td" style="left:592.00px;width:101.00px"><div class="abs" style="left:21.0px;top:-1.5px;width:67.5px;height:23.0px;background:#fff;filter:blur(2.5px)"></div><div class="abs" style="left:30.0px;top:6.8px;width:47.4px;height:7.6px;background:linear-gradient(90deg,#d2d2d5 0.0px,#d2d2d5 7.9px,#d2d2d5 7.9px,#d2d2d5 15.8px,#d2d2d5 15.8px,#d2d2d5 23.7px,#cfcfd3 23.7px,#cfcfd3 31.6px,#d2d2d5 31.6px,#d2d2d5 39.5px,#d2d2d5 39.5px,#d2d2d5 47.4px)"></div></div>
<div class="td" style="left:693.00px;width:100.75px"><span class="cx" style="top:5.50px;line-height:9.0px;font-size:7.7px">WW-00001</span></div>
<div class="td" style="left:793.75px;width:100.75px"><span class="cx" style="top:5.50px;line-height:9.0px;font-size:7.45px">XMIOT001</span></div>
<div class="td" style="left:894.50px;width:198.25px"><div class="rb g" style="top:2.80px;left:11.5px;width:48.2px"><svg class="abs" style="left:10.7px;top:1.9px" width="9.2" height="10.35" viewBox="0 0 8 9" fill="none" stroke="#a6a6a6" stroke-width="0.7" stroke-linecap="round"><path d="M4 0.9V4.2M2.3 2.2A3 3 0 1 0 5.7 2.2"/></svg><span class="bt" style="left:22.6px">重启</span></div><div class="rb b" style="top:2.80px;left:69.6px;width:58.3px"><svg class="abs" style="left:11.1px;top:2.2px" width="12" height="9" viewBox="0 0 12 9" fill="none" stroke="#fff" stroke-width="0.85" stroke-linejoin="round"><path d="M0.8 8.2V3.4L3.6 0.8H10.4Q11.2 0.8 11.2 1.6V7.4Q11.2 8.2 10.4 8.2Z"/><rect x="7.7" y="1.9" width="1.9" height="2.6" rx="0.5"/></svg><span class="bt" style="left:25.9px"><b>卡信息</b></span></div><div class="rb b" style="top:2.80px;left:137.7px;width:48.1px"><svg class="abs" style="left:11.1px;top:2.5px" width="9" height="9" viewBox="0 0 9 9" fill="none" stroke="#fff" stroke-width="0.8"><circle cx="4.5" cy="4.5" r="3.6"/><g fill="#fff" stroke="none"><circle cx="2.9" cy="4.5" r="0.5"/><circle cx="4.5" cy="4.5" r="0.5"/><circle cx="6.1" cy="4.5" r="0.5"/></g></svg><span class="bt" style="left:22.8px"><b>更多</b></span></div></div>
</div>
<div class="tr r" style="top:110px;height:22px;background:#fff">
<div class="td f" style="left:0.00px;width:19.50px"><div class="cb" style="top:7.1px"></div></div>
<div class="td" style="left:19.50px;width:42.50px"><span class="cx" style="top:6.30px;line-height:9.0px">5</span></div>
<div class="td" style="left:62.00px;width:126.50px"><div class="abs" style="left:20.4px;top:-1.5px;width:91.0px;height:24.0px;background:#fff;filter:blur(2.5px)"></div><div class="abs" style="left:29.4px;top:7.6px;width:71.1px;height:7.6px;background:linear-gradient(90deg,#c9d8f8 0.0px,#c9d8f8 7.9px,#d3dffa 7.9px,#d3dffa 15.8px,#c9d8f8 15.8px,#c9d8f8 23.7px,#d3dffa 23.7px,#d3dffa 31.6px,#c5d5f7 31.6px,#c5d5f7 39.5px,#d3dffa 39.5px,#d3dffa 47.4px,#c9d8f8 47.4px,#c9d8f8 55.3px,#dbe5fb 55.3px,#dbe5fb 63.2px,#d8e2fa 63.2px,#d8e2fa 71.1px)"></div></div>
<div class="td" style="left:188.50px;width:100.50px"><span class="cx" style="top:6.30px;line-height:9.0px">输电监测</span></div>
<div class="td" style="left:289.00px;width:101.00px"><span class="cx" style="top:6.30px;line-height:9.0px;font-size:7.45px">上海市-浦东新区</span></div>
<div class="td" style="left:390.00px;width:101.00px"><div class="abs" style="left:-6.0px;top:-1.5px;width:114.0px;height:24.0px;background:#fff;filter:blur(2.5px)"></div><div class="abs" style="left:3.0px;top:7.6px;width:94.8px;height:7.6px;background:linear-gradient(90deg,#c8c8cc 0.0px,#c8c8cc 7.9px,#c8c8cc 7.9px,#c8c8cc 15.8px,#c8c8cc 15.8px,#c8c8cc 23.7px,#dcdcde 23.7px,#dcdcde 31.6px,#d1d1d4 31.6px,#d1d1d4 39.5px,#dcdcde 39.5px,#dcdcde 47.4px,#c8c8cc 47.4px,#c8c8cc 55.3px,#d8d8da 55.3px,#d8d8da 63.2px,#dcdcde 63.2px,#dcdcde 71.1px,#c8c8cc 71.1px,#c8c8cc 79.0px,#c8c8cc 79.0px,#c8c8cc 86.9px,#ececee 86.9px,#ececee 94.8px)"></div></div>
<div class="td" style="left:491.00px;width:101.00px"><div class="tag" style="top:4.40px">不在线</div></div>
<div class="td" style="left:592.00px;width:101.00px"><div class="abs" style="left:21.0px;top:-1.5px;width:67.5px;height:24.0px;background:#fff;filter:blur(2.5px)"></div><div class="abs" style="left:30.0px;top:7.6px;width:47.4px;height:7.6px;background:linear-gradient(90deg,#e0e0e2 0.0px,#e0e0e2 7.9px,#d2d2d5 7.9px,#d2d2d5 15.8px,#d6d6d9 15.8px,#d6d6d9 23.7px,#dcdcde 23.7px,#dcdcde 31.6px,#dcdcde 31.6px,#dcdcde 39.5px,#e0e0e2 39.5px,#e0e0e2 47.4px)"></div></div>
<div class="td" style="left:693.00px;width:100.75px"><span class="cx" style="top:6.30px;line-height:9.0px;font-size:7.7px">WW-00001</span></div>
<div class="td" style="left:793.75px;width:100.75px"><span class="cx" style="top:6.30px;line-height:9.0px;font-size:7.45px">XMIOT001</span></div>
<div class="td" style="left:894.50px;width:198.25px"><div class="rb g" style="top:3.60px;left:11.5px;width:48.2px"><svg class="abs" style="left:10.7px;top:1.9px" width="9.2" height="10.35" viewBox="0 0 8 9" fill="none" stroke="#a6a6a6" stroke-width="0.7" stroke-linecap="round"><path d="M4 0.9V4.2M2.3 2.2A3 3 0 1 0 5.7 2.2"/></svg><span class="bt" style="left:22.6px">重启</span></div><div class="rb b" style="top:3.60px;left:69.6px;width:58.3px"><svg class="abs" style="left:11.1px;top:2.2px" width="12" height="9" viewBox="0 0 12 9" fill="none" stroke="#fff" stroke-width="0.85" stroke-linejoin="round"><path d="M0.8 8.2V3.4L3.6 0.8H10.4Q11.2 0.8 11.2 1.6V7.4Q11.2 8.2 10.4 8.2Z"/><rect x="7.7" y="1.9" width="1.9" height="2.6" rx="0.5"/></svg><span class="bt" style="left:25.9px"><b>卡信息</b></span></div><div class="rb b" style="top:3.60px;left:137.7px;width:48.1px"><svg class="abs" style="left:11.1px;top:2.5px" width="9" height="9" viewBox="0 0 9 9" fill="none" stroke="#fff" stroke-width="0.8"><circle cx="4.5" cy="4.5" r="3.6"/><g fill="#fff" stroke="none"><circle cx="2.9" cy="4.5" r="0.5"/><circle cx="4.5" cy="4.5" r="0.5"/><circle cx="6.1" cy="4.5" r="0.5"/></g></svg><span class="bt" style="left:22.8px"><b>更多</b></span></div></div>
</div>
<div class="tr r" style="top:132px;height:22px;background:#f8f9fa">
<div class="td f" style="left:0.00px;width:19.50px"><div class="cb" style="top:6.9px"></div></div>
<div class="td" style="left:19.50px;width:42.50px"><span class="cx" style="top:6.10px;line-height:9.0px">6</span></div>
<div class="td" style="left:62.00px;width:126.50px"><div class="abs" style="left:20.4px;top:-1.5px;width:91.0px;height:24.0px;background:#fff;filter:blur(2.5px)"></div><div class="abs" style="left:29.4px;top:1.4px;width:71.1px;height:7.7px;background:linear-gradient(90deg,#e9effc 0.0px,#e9effc 7.9px,#f0f4fd 7.9px,#f0f4fd 15.8px,#e6edfc 15.8px,#e6edfc 23.7px,#e6edfc 23.7px,#e6edfc 31.6px,#f0f4fd 31.6px,#f0f4fd 39.5px,#f0f4fd 39.5px,#f0f4fd 47.4px,#f0f4fd 47.4px,#f0f4fd 55.3px,#f0f4fd 55.3px,#f0f4fd 63.2px,#e9effc 63.2px,#e9effc 71.1px)"></div><div class="abs" style="left:29.4px;top:9.1px;width:71.1px;height:7.9px;background:linear-gradient(90deg,#c9d8f8 0.0px,#c9d8f8 7.9px,#d3dffa 7.9px,#d3dffa 15.8px,#c9d8f8 15.8px,#c9d8f8 23.7px,#dbe5fb 23.7px,#dbe5fb 31.6px,#dbe5fb 31.6px,#dbe5fb 39.5px,#c5d5f7 39.5px,#c5d5f7 47.4px,#d3dffa 47.4px,#d3dffa 55.3px,#d8e2fa 55.3px,#d8e2fa 63.2px,#c9d8f8 63.2px,#c9d8f8 71.1px)"></div></div>
<div class="td" style="left:188.50px;width:100.50px"><span class="cx" style="top:6.10px;line-height:9.0px">计量自动化</span></div>
<div class="td" style="left:289.00px;width:101.00px"><span class="cx" style="top:6.10px;line-height:9.0px;font-size:7.45px">上海市-浦东新区</span></div>
<div class="td" style="left:390.00px;width:101.00px"><div class="abs" style="left:1.5px;top:-1.5px;width:106.0px;height:24.0px;background:#fff;filter:blur(2.5px)"></div><div class="abs" style="left:10.5px;top:1.4px;width:86.9px;height:7.7px;background:linear-gradient(90deg,#ececee 0.0px,#ececee 7.9px,#e9e9eb 7.9px,#e9e9eb 15.8px,#ececee 15.8px,#ececee 23.7px,#e6e6e8 23.7px,#e6e6e8 31.6px,#e9e9eb 31.6px,#e9e9eb 39.5px,#e6e6e8 39.5px,#e6e6e8 47.4px,#e9e9eb 47.4px,#e9e9eb 55.3px,#e9e9eb 55.3px,#e9e9eb 63.2px,#ececee 63.2px,#ececee 71.1px,#e9e9eb 71.1px,#e9e9eb 79.0px,#ececee 79.0px,#ececee 86.9px)"></div><div class="abs" style="left:10.5px;top:9.1px;width:86.9px;height:7.9px;background:linear-gradient(90deg,#dcdcde 0.0px,#dcdcde 7.9px,#dcdcde 7.9px,#dcdcde 15.8px,#dcdcde 15.8px,#dcdcde 23.7px,#d8d8da 23.7px,#d8d8da 31.6px,#d1d1d4 31.6px,#d1d1d4 39.5px,#dcdcde 39.5px,#dcdcde 47.4px,#d1d1d4 47.4px,#d1d1d4 55.3px,#d1d1d4 55.3px,#d1d1d4 63.2px,#cdcdd0 63.2px,#cdcdd0 71.1px,#d1d1d4 71.1px,#d1d1d4 79.0px,#ececee 79.0px,#ececee 86.9px)"></div></div>
<div class="td" style="left:491.00px;width:101.00px"><div class="tag" style="top:4.20px">不在线</div></div>
<div class="td" style="left:592.00px;width:101.00px"><div class="abs" style="left:21.0px;top:-1.5px;width:67.5px;height:24.0px;background:#fff;filter:blur(2.5px)"></div><div class="abs" style="left:30.0px;top:1.4px;width:47.4px;height:7.7px;background:linear-gradient(90deg,#f1f1f2 0.0px,#f1f1f2 7.9px,#ebebec 7.9px,#ebebec 15.8px,#e8e8ea 15.8px,#e8e8ea 23.7px,#e8e8ea 23.7px,#e8e8ea 31.6px,#ebebec 31.6px,#ebebec 39.5px,#f1f1f2 39.5px,#f1f1f2 47.4px)"></div><div class="abs" style="left:30.0px;top:9.1px;width:47.4px;height:7.9px;background:linear-gradient(90deg,#dcdcde 0.0px,#dcdcde 7.9px,#d6d6d9 7.9px,#d6d6d9 15.8px,#e0e0e2 15.8px,#e0e0e2 23.7px,#dcdcde 23.7px,#dcdcde 31.6px,#d2d2d5 31.6px,#d2d2d5 39.5px,#dcdcde 39.5px,#dcdcde 47.4px)"></div></div>
<div class="td" style="left:693.00px;width:100.75px"><span class="cx" style="top:6.10px;line-height:9.0px;font-size:7.7px">WW-00001</span></div>
<div class="td" style="left:793.75px;width:100.75px"><span class="cx" style="top:6.10px;line-height:9.0px;font-size:7.45px">XMIOT001</span></div>
<div class="td" style="left:894.50px;width:198.25px"><div class="rb g" style="top:3.40px;left:11.5px;width:48.2px"><svg class="abs" style="left:10.7px;top:1.9px" width="9.2" height="10.35" viewBox="0 0 8 9" fill="none" stroke="#a6a6a6" stroke-width="0.7" stroke-linecap="round"><path d="M4 0.9V4.2M2.3 2.2A3 3 0 1 0 5.7 2.2"/></svg><span class="bt" style="left:22.6px">重启</span></div><div class="rb b" style="top:3.40px;left:69.6px;width:58.3px"><svg class="abs" style="left:11.1px;top:2.2px" width="12" height="9" viewBox="0 0 12 9" fill="none" stroke="#fff" stroke-width="0.85" stroke-linejoin="round"><path d="M0.8 8.2V3.4L3.6 0.8H10.4Q11.2 0.8 11.2 1.6V7.4Q11.2 8.2 10.4 8.2Z"/><rect x="7.7" y="1.9" width="1.9" height="2.6" rx="0.5"/></svg><span class="bt" style="left:25.9px"><b>卡信息</b></span></div><div class="rb b" style="top:3.40px;left:137.7px;width:48.1px"><svg class="abs" style="left:11.1px;top:2.5px" width="9" height="9" viewBox="0 0 9 9" fill="none" stroke="#fff" stroke-width="0.8"><circle cx="4.5" cy="4.5" r="3.6"/><g fill="#fff" stroke="none"><circle cx="2.9" cy="4.5" r="0.5"/><circle cx="4.5" cy="4.5" r="0.5"/><circle cx="6.1" cy="4.5" r="0.5"/></g></svg><span class="bt" style="left:22.8px"><b>更多</b></span></div></div>
</div>
<div class="tr r" style="top:154px;height:22px;background:#fff">
<div class="td f" style="left:0.00px;width:19.50px"><div class="cb" style="top:6.7px"></div></div>
<div class="td" style="left:19.50px;width:42.50px"><span class="cx" style="top:5.90px;line-height:9.0px">7</span></div>
<div class="td" style="left:62.00px;width:126.50px"><div class="abs" style="left:20.4px;top:-1.5px;width:91.0px;height:24.0px;background:#fff;filter:blur(2.5px)"></div><div class="abs" style="left:29.4px;top:2.9px;width:71.1px;height:8.0px;background:linear-gradient(90deg,#dbe5fb 0.0px,#dbe5fb 7.9px,#c9d8f8 7.9px,#c9d8f8 15.8px,#d3dffa 15.8px,#d3dffa 23.7px,#c9d8f8 23.7px,#c9d8f8 31.6px,#d3dffa 31.6px,#d3dffa 39.5px,#c5d5f7 39.5px,#c5d5f7 47.4px,#d3dffa 47.4px,#d3dffa 55.3px,#dbe5fb 55.3px,#dbe5fb 63.2px,#d3dffa 63.2px,#d3dffa 71.1px)"></div><div class="abs" style="left:29.4px;top:10.9px;width:71.1px;height:8.0px;background:linear-gradient(90deg,#f0f4fd 0.0px,#f0f4fd 7.9px,#e6edfc 7.9px,#e6edfc 15.8px,#f0f4fd 15.8px,#f0f4fd 23.7px,#e9effc 23.7px,#e9effc 31.6px,#e6edfc 31.6px,#e6edfc 39.5px,#e6edfc 39.5px,#e6edfc 47.4px,#f0f4fd 47.4px,#f0f4fd 55.3px,#edf2fd 55.3px,#edf2fd 63.2px,#f0f4fd 63.2px,#f0f4fd 71.1px)"></div></div>
<div class="td" style="left:188.50px;width:100.50px"><span class="cx" style="top:5.90px;line-height:9.0px">充电桩</span></div>
<div class="td" style="left:289.00px;width:101.00px"><span class="cx" style="top:5.90px;line-height:9.0px;font-size:7.45px">江苏省-南京市-雨花台区</span></div>
<div class="td" style="left:390.00px;width:101.00px"><div class="abs" style="left:-6.0px;top:-1.5px;width:114.0px;height:24.0px;background:#fff;filter:blur(2.5px)"></div><div class="abs" style="left:3.0px;top:2.9px;width:94.8px;height:8.0px;background:linear-gradient(90deg,#d1d1d4 0.0px,#d1d1d4 7.9px,#cdcdd0 7.9px,#cdcdd0 15.8px,#d8d8da 15.8px,#d8d8da 23.7px,#c8c8cc 23.7px,#c8c8cc 31.6px,#cdcdd0 31.6px,#cdcdd0 39.5px,#cdcdd0 39.5px,#cdcdd0 47.4px,#cdcdd0 47.4px,#cdcdd0 55.3px,#c8c8cc 55.3px,#c8c8cc 63.2px,#d1d1d4 63.2px,#d1d1d4 71.1px,#d1d1d4 71.1px,#d1d1d4 79.0px,#d1d1d4 79.0px,#d1d1d4 86.9px,#e6e6e8 86.9px,#e6e6e8 94.8px)"></div><div class="abs" style="left:3.0px;top:10.9px;width:94.8px;height:8.0px;background:linear-gradient(90deg,#ececee 0.0px,#ececee 7.9px,#f0f0f1 7.9px,#f0f0f1 15.8px,#ececee 15.8px,#ececee 23.7px,#f0f0f1 23.7px,#f0f0f1 31.6px,#e9e9eb 31.6px,#e9e9eb 39.5px,#ececee 39.5px,#ececee 47.4px,#ececee 47.4px,#ececee 55.3px,#e6e6e8 55.3px,#e6e6e8 63.2px,#e6e6e8 63.2px,#e6e6e8 71.1px,#e6e6e8 71.1px,#e6e6e8 79.0px,#ececee 79.0px,#ececee 86.9px,#f0f0f1 86.9px,#f0f0f1 94.8px)"></div></div>
<div class="td" style="left:491.00px;width:101.00px"><div class="tag" style="top:4.00px">不在线</div></div>
<div class="td" style="left:592.00px;width:101.00px"><div class="abs" style="left:21.0px;top:-1.5px;width:67.5px;height:24.0px;background:#fff;filter:blur(2.5px)"></div><div class="abs" style="left:30.0px;top:2.9px;width:47.4px;height:8.0px;background:linear-gradient(90deg,#d6d6d9 0.0px,#d6d6d9 7.9px,#d6d6d9 7.9px,#d6d6d9 15.8px,#cfcfd3 15.8px,#cfcfd3 23.7px,#dcdcde 23.7px,#dcdcde 31.6px,#d6d6d9 31.6px,#d6d6d9 39.5px,#dcdcde 39.5px,#dcdcde 47.4px)"></div><div class="abs" style="left:30.0px;top:10.9px;width:47.4px;height:8.0px;background:linear-gradient(90deg,#eeeeef 0.0px,#eeeeef 7.9px,#ebebec 7.9px,#ebebec 15.8px,#ebebec 15.8px,#ebebec 23.7px,#f1f1f2 23.7px,#f1f1f2 31.6px,#eeeeef 31.6px,#eeeeef 39.5px,#e8e8ea 39.5px,#e8e8ea 47.4px)"></div></div>
<div class="td" style="left:693.00px;width:100.75px"><span class="cx" style="top:5.90px;line-height:9.0px;font-size:7.7px">WW-00001</span></div>
<div class="td" style="left:793.75px;width:100.75px"><span class="cx" style="top:5.90px;line-height:9.0px;font-size:7.45px">XMIOT001</span></div>
<div class="td" style="left:894.50px;width:198.25px"><div class="rb g" style="top:3.20px;left:11.5px;width:48.2px"><svg class="abs" style="left:10.7px;top:1.9px" width="9.2" height="10.35" viewBox="0 0 8 9" fill="none" stroke="#a6a6a6" stroke-width="0.7" stroke-linecap="round"><path d="M4 0.9V4.2M2.3 2.2A3 3 0 1 0 5.7 2.2"/></svg><span class="bt" style="left:22.6px">重启</span></div><div class="rb b" style="top:3.20px;left:69.6px;width:58.3px"><svg class="abs" style="left:11.1px;top:2.2px" width="12" height="9" viewBox="0 0 12 9" fill="none" stroke="#fff" stroke-width="0.85" stroke-linejoin="round"><path d="M0.8 8.2V3.4L3.6 0.8H10.4Q11.2 0.8 11.2 1.6V7.4Q11.2 8.2 10.4 8.2Z"/><rect x="7.7" y="1.9" width="1.9" height="2.6" rx="0.5"/></svg><span class="bt" style="left:25.9px"><b>卡信息</b></span></div><div class="rb b" style="top:3.20px;left:137.7px;width:48.1px"><svg class="abs" style="left:11.1px;top:2.5px" width="9" height="9" viewBox="0 0 9 9" fill="none" stroke="#fff" stroke-width="0.8"><circle cx="4.5" cy="4.5" r="3.6"/><g fill="#fff" stroke="none"><circle cx="2.9" cy="4.5" r="0.5"/><circle cx="4.5" cy="4.5" r="0.5"/><circle cx="6.1" cy="4.5" r="0.5"/></g></svg><span class="bt" style="left:22.8px"><b>更多</b></span></div></div>
</div>
<div class="tr r" style="top:176px;height:22px;background:#f8f9fa">
<div class="td f" style="left:0.00px;width:19.50px"><div class="cb" style="top:6.5px"></div></div>
<div class="td" style="left:19.50px;width:42.50px"><span class="cx" style="top:5.70px;line-height:9.0px">8</span></div>
<div class="td" style="left:62.00px;width:126.50px"><div class="abs" style="left:20.4px;top:-1.5px;width:91.0px;height:24.0px;background:#fff;filter:blur(2.5px)"></div><div class="abs" style="left:29.4px;top:7.0px;width:71.1px;height:7.6px;background:linear-gradient(90deg,#dbe5fb 0.0px,#dbe5fb 7.9px,#c5d5f7 7.9px,#c5d5f7 15.8px,#d8e2fa 15.8px,#d8e2fa 23.7px,#d8e2fa 23.7px,#d8e2fa 31.6px,#c5d5f7 31.6px,#c5d5f7 39.5px,#d8e2fa 39.5px,#d8e2fa 47.4px,#d3dffa 47.4px,#d3dffa 55.3px,#d8e2fa 55.3px,#d8e2fa 63.2px,#d3dffa 63.2px,#d3dffa 71.1px)"></div></div>
<div class="td" style="left:188.50px;width:100.50px"><span class="cx" style="top:5.70px;line-height:9.0px">配网自动化</span></div>
<div class="td" style="left:289.00px;width:101.00px"><span class="cx" style="top:5.70px;line-height:9.0px;font-size:7.45px">上海市-浦东新区</span></div>
<div class="td" style="left:390.00px;width:101.00px"><div class="abs" style="left:-6.0px;top:-1.5px;width:114.0px;height:24.0px;background:#fff;filter:blur(2.5px)"></div><div class="abs" style="left:3.0px;top:7.0px;width:94.8px;height:7.6px;background:linear-gradient(90deg,#dcdcde 0.0px,#dcdcde 7.9px,#dcdcde 7.9px,#dcdcde 15.8px,#c8c8cc 15.8px,#c8c8cc 23.7px,#cdcdd0 23.7px,#cdcdd0 31.6px,#d1d1d4 31.6px,#d1d1d4 39.5px,#dcdcde 39.5px,#dcdcde 47.4px,#c8c8cc 47.4px,#c8c8cc 55.3px,#d1d1d4 55.3px,#d1d1d4 63.2px,#d1d1d4 63.2px,#d1d1d4 71.1px,#d1d1d4 71.1px,#d1d1d4 79.0px,#cdcdd0 79.0px,#cdcdd0 86.9px,#e6e6e8 86.9px,#e6e6e8 94.8px)"></div></div>
<div class="td" style="left:491.00px;width:101.00px"><div class="tag" style="top:3.80px">不在线</div></div>
<div class="td" style="left:592.00px;width:101.00px"><div class="abs" style="left:21.0px;top:-1.5px;width:67.5px;height:24.0px;background:#fff;filter:blur(2.5px)"></div><div class="abs" style="left:30.0px;top:7.0px;width:47.4px;height:7.6px;background:linear-gradient(90deg,#e0e0e2 0.0px,#e0e0e2 7.9px,#cfcfd3 7.9px,#cfcfd3 15.8px,#dcdcde 15.8px,#dcdcde 23.7px,#e0e0e2 23.7px,#e0e0e2 31.6px,#e0e0e2 31.6px,#e0e0e2 39.5px,#e0e0e2 39.5px,#e0e0e2 47.4px)"></div></div>
<div class="td" style="left:693.00px;width:100.75px"><span class="cx" style="top:5.70px;line-height:9.0px;font-size:7.7px">WW-00001</span></div>
<div class="td" style="left:793.75px;width:100.75px"><span class="cx" style="top:5.70px;line-height:9.0px;font-size:7.45px">XMIOT001</span></div>
<div class="td" style="left:894.50px;width:198.25px"><div class="rb g" style="top:3.00px;left:11.5px;width:48.2px"><svg class="abs" style="left:10.7px;top:1.9px" width="9.2" height="10.35" viewBox="0 0 8 9" fill="none" stroke="#a6a6a6" stroke-width="0.7" stroke-linecap="round"><path d="M4 0.9V4.2M2.3 2.2A3 3 0 1 0 5.7 2.2"/></svg><span class="bt" style="left:22.6px">重启</span></div><div class="rb b" style="top:3.00px;left:69.6px;width:58.3px"><svg class="abs" style="left:11.1px;top:2.2px" width="12" height="9" viewBox="0 0 12 9" fill="none" stroke="#fff" stroke-width="0.85" stroke-linejoin="round"><path d="M0.8 8.2V3.4L3.6 0.8H10.4Q11.2 0.8 11.2 1.6V7.4Q11.2 8.2 10.4 8.2Z"/><rect x="7.7" y="1.9" width="1.9" height="2.6" rx="0.5"/></svg><span class="bt" style="left:25.9px"><b>卡信息</b></span></div><div class="rb b" style="top:3.00px;left:137.7px;width:48.1px"><svg class="abs" style="left:11.1px;top:2.5px" width="9" height="9" viewBox="0 0 9 9" fill="none" stroke="#fff" stroke-width="0.8"><circle cx="4.5" cy="4.5" r="3.6"/><g fill="#fff" stroke="none"><circle cx="2.9" cy="4.5" r="0.5"/><circle cx="4.5" cy="4.5" r="0.5"/><circle cx="6.1" cy="4.5" r="0.5"/></g></svg><span class="bt" style="left:22.8px"><b>更多</b></span></div></div>
</div>
<div class="tr r" style="top:198px;height:21px;background:#fff">
<div class="td f" style="left:0.00px;width:19.50px"><div class="cb" style="top:6.3px"></div></div>
<div class="td" style="left:19.50px;width:42.50px"><span class="cx" style="top:5.50px;line-height:9.0px">9</span></div>
<div class="td" style="left:62.00px;width:126.50px"><div class="abs" style="left:20.4px;top:-1.5px;width:91.0px;height:23.0px;background:#fff;filter:blur(2.5px)"></div><div class="abs" style="left:29.4px;top:6.8px;width:71.1px;height:7.6px;background:linear-gradient(90deg,#c5d5f7 0.0px,#c5d5f7 7.9px,#c9d8f8 7.9px,#c9d8f8 15.8px,#d8e2fa 15.8px,#d8e2fa 23.7px,#c9d8f8 23.7px,#c9d8f8 31.6px,#d3dffa 31.6px,#d3dffa 39.5px,#d3dffa 39.5px,#d3dffa 47.4px,#dbe5fb 47.4px,#dbe5fb 55.3px,#c9d8f8 55.3px,#c9d8f8 63.2px,#c9d8f8 63.2px,#c9d8f8 71.1px)"></div></div>
<div class="td" style="left:188.50px;width:100.50px"><span class="cx" style="top:5.50px;line-height:9.0px">计量自动化</span></div>
<div class="td" style="left:289.00px;width:101.00px"><span class="cx" style="top:5.50px;line-height:9.0px;font-size:7.45px">上海市-浦东新区</span></div>
<div class="td" style="left:390.00px;width:101.00px"><div class="abs" style="left:1.5px;top:-1.5px;width:106.0px;height:23.0px;background:#fff;filter:blur(2.5px)"></div><div class="abs" style="left:10.5px;top:6.8px;width:86.9px;height:7.6px;background:linear-gradient(90deg,#dcdcde 0.0px,#dcdcde 7.9px,#cdcdd0 7.9px,#cdcdd0 15.8px,#dcdcde 15.8px,#dcdcde 23.7px,#c8c8cc 23.7px,#c8c8cc 31.6px,#c8c8cc 31.6px,#c8c8cc 39.5px,#cdcdd0 39.5px,#cdcdd0 47.4px,#d8d8da 47.4px,#d8d8da 55.3px,#dcdcde 55.3px,#dcdcde 63.2px,#dcdcde 63.2px,#dcdcde 71.1px,#dcdcde 71.1px,#dcdcde 79.0px,#ececee 79.0px,#ececee 86.9px)"></div></div>
<div class="td" style="left:491.00px;width:101.00px"><div class="tag" style="top:3.60px">不在线</div></div>
<div class="td" style="left:592.00px;width:101.00px"><div class="abs" style="left:21.0px;top:-1.5px;width:67.5px;height:23.0px;background:#fff;filter:blur(2.5px)"></div><div class="abs" style="left:30.0px;top:6.8px;width:47.4px;height:7.6px;background:linear-gradient(90deg,#dcdcde 0.0px,#dcdcde 7.9px,#d2d2d5 7.9px,#d2d2d5 15.8px,#e0e0e2 15.8px,#e0e0e2 23.7px,#e0e0e2 23.7px,#e0e0e2 31.6px,#d2d2d5 31.6px,#d2d2d5 39.5px,#e0e0e2 39.5px,#e0e0e2 47.4px)"></div></div>
<div class="td" style="left:693.00px;width:100.75px"><span class="cx" style="top:5.50px;line-height:9.0px;font-size:7.7px">WW-00001</span></div>
<div class="td" style="left:793.75px;width:100.75px"><span class="cx" style="top:5.50px;line-height:9.0px;font-size:7.45px">XMIOT001</span></div>
<div class="td" style="left:894.50px;width:198.25px"><div class="rb g" style="top:2.80px;left:11.5px;width:48.2px"><svg class="abs" style="left:10.7px;top:1.9px" width="9.2" height="10.35" viewBox="0 0 8 9" fill="none" stroke="#a6a6a6" stroke-width="0.7" stroke-linecap="round"><path d="M4 0.9V4.2M2.3 2.2A3 3 0 1 0 5.7 2.2"/></svg><span class="bt" style="left:22.6px">重启</span></div><div class="rb b" style="top:2.80px;left:69.6px;width:58.3px"><svg class="abs" style="left:11.1px;top:2.2px" width="12" height="9" viewBox="0 0 12 9" fill="none" stroke="#fff" stroke-width="0.85" stroke-linejoin="round"><path d="M0.8 8.2V3.4L3.6 0.8H10.4Q11.2 0.8 11.2 1.6V7.4Q11.2 8.2 10.4 8.2Z"/><rect x="7.7" y="1.9" width="1.9" height="2.6" rx="0.5"/></svg><span class="bt" style="left:25.9px"><b>卡信息</b></span></div><div class="rb b" style="top:2.80px;left:137.7px;width:48.1px"><svg class="abs" style="left:11.1px;top:2.5px" width="9" height="9" viewBox="0 0 9 9" fill="none" stroke="#fff" stroke-width="0.8"><circle cx="4.5" cy="4.5" r="3.6"/><g fill="#fff" stroke="none"><circle cx="2.9" cy="4.5" r="0.5"/><circle cx="4.5" cy="4.5" r="0.5"/><circle cx="6.1" cy="4.5" r="0.5"/></g></svg><span class="bt" style="left:22.8px"><b>更多</b></span></div></div>
</div>
<div class="tr r" style="top:219px;height:22px;background:#f8f9fa">
<div class="td f" style="left:0.00px;width:19.50px"><div class="cb" style="top:7.1px"></div></div>
<div class="td" style="left:19.50px;width:42.50px"><span class="cx" style="top:6.30px;line-height:9.0px">10</span></div>
<div class="td" style="left:62.00px;width:126.50px"><div class="abs" style="left:20.4px;top:-1.5px;width:91.0px;height:24.0px;background:#fff;filter:blur(2.5px)"></div><div class="abs" style="left:29.4px;top:1.6px;width:71.1px;height:7.7px;background:linear-gradient(90deg,#edf2fd 0.0px,#edf2fd 7.9px,#e9effc 7.9px,#e9effc 15.8px,#edf2fd 15.8px,#edf2fd 23.7px,#f0f4fd 23.7px,#f0f4fd 31.6px,#edf2fd 31.6px,#edf2fd 39.5px,#f0f4fd 39.5px,#f0f4fd 47.4px,#e6edfc 47.4px,#e6edfc 55.3px,#f0f4fd 55.3px,#f0f4fd 63.2px,#f0f4fd 63.2px,#f0f4fd 71.1px)"></div><div class="abs" style="left:29.4px;top:9.3px;width:71.1px;height:7.9px;background:linear-gradient(90deg,#dbe5fb 0.0px,#dbe5fb 7.9px,#c9d8f8 7.9px,#c9d8f8 15.8px,#d3dffa 15.8px,#d3dffa 23.7px,#c5d5f7 23.7px,#c5d5f7 31.6px,#c9d8f8 31.6px,#c9d8f8 39.5px,#d3dffa 39.5px,#d3dffa 47.4px,#dbe5fb 47.4px,#dbe5fb 55.3px,#c9d8f8 55.3px,#c9d8f8 63.2px,#d3dffa 63.2px,#d3dffa 71.1px)"></div></div>
<div class="td" style="left:188.50px;width:100.50px"><span class="cx" style="top:6.30px;line-height:9.0px">其他</span></div>
<div class="td" style="left:289.00px;width:101.00px"><span class="cx" style="top:6.30px;line-height:9.0px;font-size:7.45px">湖北省-武汉市-武昌区</span></div>
<div class="td" style="left:390.00px;width:101.00px"><div class="abs" style="left:-6.0px;top:-1.5px;width:114.0px;height:24.0px;background:#fff;filter:blur(2.5px)"></div><div class="abs" style="left:3.0px;top:1.6px;width:94.8px;height:7.7px;background:linear-gradient(90deg,#e9e9eb 0.0px,#e9e9eb 7.9px,#ececee 7.9px,#ececee 15.8px,#e9e9eb 15.8px,#e9e9eb 23.7px,#ececee 23.7px,#ececee 31.6px,#f0f0f1 31.6px,#f0f0f1 39.5px,#ececee 39.5px,#ececee 47.4px,#e6e6e8 47.4px,#e6e6e8 55.3px,#f0f0f1 55.3px,#f0f0f1 63.2px,#f0f0f1 63.2px,#f0f0f1 71.1px,#ececee 71.1px,#ececee 79.0px,#ececee 79.0px,#ececee 86.9px,#ececee 86.9px,#ececee 94.8px)"></div><div class="abs" style="left:3.0px;top:9.3px;width:94.8px;height:7.9px;background:linear-gradient(90deg,#cdcdd0 0.0px,#cdcdd0 7.9px,#dcdcde 7.9px,#dcdcde 15.8px,#cdcdd0 15.8px,#cdcdd0 23.7px,#d8d8da 23.7px,#d8d8da 31.6px,#cdcdd0 31.6px,#cdcdd0 39.5px,#d1d1d4 39.5px,#d1d1d4 47.4px,#d8d8da 47.4px,#d8d8da 55.3px,#d8d8da 55.3px,#d8d8da 63.2px,#c8c8cc 63.2px,#c8c8cc 71.1px,#d8d8da 71.1px,#d8d8da 79.0px,#c8c8cc 79.0px,#c8c8cc 86.9px,#e9e9eb 86.9px,#e9e9eb 94.8px)"></div></div>
<div class="td" style="left:491.00px;width:101.00px"><div class="tag" style="top:4.40px">不在线</div></div>
<div class="td" style="left:592.00px;width:101.00px"><div class="abs" style="left:21.0px;top:-1.5px;width:67.5px;height:24.0px;background:#fff;filter:blur(2.5px)"></div><div class="abs" style="left:30.0px;top:1.6px;width:47.4px;height:7.7px;background:linear-gradient(90deg,#f1f1f2 0.0px,#f1f1f2 7.9px,#f1f1f2 7.9px,#f1f1f2 15.8px,#e8e8ea 15.8px,#e8e8ea 23.7px,#f1f1f2 23.7px,#f1f1f2 31.6px,#ebebec 31.6px,#ebebec 39.5px,#ebebec 39.5px,#ebebec 47.4px)"></div><div class="abs" style="left:30.0px;top:9.3px;width:47.4px;height:7.9px;background:linear-gradient(90deg,#e0e0e2 0.0px,#e0e0e2 7.9px,#cfcfd3 7.9px,#cfcfd3 15.8px,#cfcfd3 15.8px,#cfcfd3 23.7px,#d6d6d9 23.7px,#d6d6d9 31.6px,#cfcfd3 31.6px,#cfcfd3 39.5px,#cfcfd3 39.5px,#cfcfd3 47.4px)"></div></div>
<div class="td" style="left:693.00px;width:100.75px"><span class="cx" style="top:6.30px;line-height:9.0px;font-size:7.7px">WW-00001</span></div>
<div class="td" style="left:793.75px;width:100.75px"><span class="cx" style="top:6.30px;line-height:9.0px;font-size:7.45px">XMIOT001</span></div>
<div class="td" style="left:894.50px;width:198.25px"><div class="rb g" style="top:3.60px;left:11.5px;width:48.2px"><svg class="abs" style="left:10.7px;top:1.9px" width="9.2" height="10.35" viewBox="0 0 8 9" fill="none" stroke="#a6a6a6" stroke-width="0.7" stroke-linecap="round"><path d="M4 0.9V4.2M2.3 2.2A3 3 0 1 0 5.7 2.2"/></svg><span class="bt" style="left:22.6px">重启</span></div><div class="rb b" style="top:3.60px;left:69.6px;width:58.3px"><svg class="abs" style="left:11.1px;top:2.2px" width="12" height="9" viewBox="0 0 12 9" fill="none" stroke="#fff" stroke-width="0.85" stroke-linejoin="round"><path d="M0.8 8.2V3.4L3.6 0.8H10.4Q11.2 0.8 11.2 1.6V7.4Q11.2 8.2 10.4 8.2Z"/><rect x="7.7" y="1.9" width="1.9" height="2.6" rx="0.5"/></svg><span class="bt" style="left:25.9px"><b>卡信息</b></span></div><div class="rb b" style="top:3.60px;left:137.7px;width:48.1px"><svg class="abs" style="left:11.1px;top:2.5px" width="9" height="9" viewBox="0 0 9 9" fill="none" stroke="#fff" stroke-width="0.8"><circle cx="4.5" cy="4.5" r="3.6"/><g fill="#fff" stroke="none"><circle cx="2.9" cy="4.5" r="0.5"/><circle cx="4.5" cy="4.5" r="0.5"/><circle cx="6.1" cy="4.5" r="0.5"/></g></svg><span class="bt" style="left:22.8px"><b>更多</b></span></div></div>
</div>
</div>
<div class="gt" style="left:155.2px;top:430.4px;font-size:8.4px">每页显示:</div>
<div class="abs" style="left:197.2px;top:429px;width:38.6px;height:12.8px;border:1px solid #c2c2c2;border-radius:2px;background:#fff"><span class="abs" style="left:8.6px;top:1.2px;font-size:8.3px;line-height:9px;color:#aaa">10</span><svg class="abs" style="right:5.6px;top:4px" width="5.4" height="3.3" viewBox="0 0 5.4 3.3"><path d="M0 0H5.4L2.7 3.3Z" fill="#a3abba"/></svg></div>
<div class="gt" style="left:237.8px;top:430.4px;font-size:8.8px">条</div>
<div class="pg" style="left:1019.7px"><svg class="abs" style="left:2.6px;top:2px" width="6" height="7.2" viewBox="0 0 6 7.2" fill="none" stroke="#a0a0a0" stroke-width="0.8"><path d="M4.3 1.2L1.6 3.6L4.3 6"/></svg></div>
<div class="pg on" style="left:1036.0px"><b>1</b></div>
<div class="pg" style="left:1052.3px">2</div>
<div class="pg" style="left:1068.6px">3</div>
<div class="pg" style="left:1084.9px"><svg class="abs" style="left:2.6px;top:2px" width="6" height="7.2" viewBox="0 0 6 7.2" fill="none" stroke="#a0a0a0" stroke-width="0.8"><path d="M1.7 1.2L4.4 3.6L1.7 6"/></svg></div>
<div class="gt" style="left:1110px;top:431px;word-spacing:0">共 30 条</div>
<div class="gt" style="left:1155.6px;top:430.6px;font-size:8.2px">到第</div>
<div class="abs" style="left:1177.4px;top:428.3px;width:23.8px;height:12.8px;border:1px solid #cfcfcf;border-radius:1.5px;background:#fff;font-size:8.6px;line-height:10.8px;padding-top:1.2px;text-align:center;color:#aaa">1</div>
<div class="gt" style="left:1205.8px;top:429.8px;font-size:8.4px">页</div>
<div class="abs" style="left:1221.8px;top:428.3px;width:25.8px;height:12.8px;border:1px solid #b8b8b8;border-radius:1.5px;background:#fff;font-size:8.6px;line-height:10.8px;padding-top:1.2px;text-align:center;color:#a8a8a8;white-space:nowrap">确定</div>
</body></html>
